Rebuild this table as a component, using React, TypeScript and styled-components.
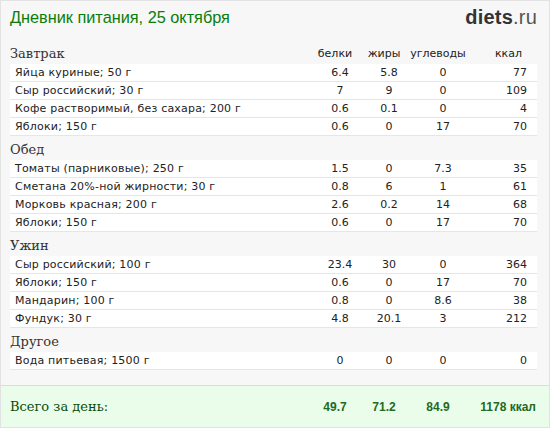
import React from "react";
import styled, { createGlobalStyle } from "styled-components";

const Global = createGlobalStyle`
  html, body { margin: 0; padding: 0; background: #ffffff; }
  * { box-sizing: border-box; }
`;

const Page = styled.div`
  width: 550px;
  height: 428px;
  border: 1px solid #e2e2e2;
  background: #f7f7f7;
  display: flex;
  flex-direction: column;
  overflow: hidden;
`;

const Content = styled.div`
  padding: 0 12px 0 9px;
  display: flex;
  flex-direction: column;
  flex: 1;
`;

const TopBar = styled.div`
  height: 39px;
  display: flex;
  justify-content: space-between;
  align-items: flex-start;
  padding-top: 5px;
`;

const Title = styled.h1`
  margin: 0;
  font-family: "Liberation Sans", Arial, sans-serif;
  font-weight: normal;
  font-size: 16.3px;
  line-height: 22px;
  color: #0a7d0a;
`;

const Logo = styled.div`
  font-family: "Liberation Sans", Arial, sans-serif;
  font-size: 20px;
  line-height: 22px;
  color: #555;
  letter-spacing: 0.2px;
  b {
    color: #333;
    font-weight: bold;
  }
`;

const cols = "300px 50px 48px 60px 54px";

const SectionHead = styled.div`
  height: 24px;
  display: grid;
  grid-template-columns: ${cols};
  padding-right: 15px;
  align-items: center;
`;

const SectionTitle = styled.div`
  font-family: "DejaVu Serif", Georgia, serif;
  font-size: 13px;
  color: #333;
  padding-top: 2px;
`;

const ColHead = styled.div<{ $right?: boolean }>`
  font-family: "DejaVu Sans", Verdana, sans-serif;
  font-size: 11px;
  color: #222;
  text-align: ${(p) => (p.$right ? "right" : "center")};
  padding-top: 2px;
`;

const Row = styled.div`
  height: 18px;
  display: grid;
  grid-template-columns: ${cols};
  padding: 0 15px 0 5px;
  align-items: center;
  background: #ffffff;
  border-bottom: 1px solid #e6e6e6;
  font-family: "DejaVu Sans", Verdana, sans-serif;
  font-size: 11px;
  color: #222;
`;

const NameCell = styled.div`
  white-space: nowrap;
  margin-right: -5px;
  letter-spacing: 0.2px;
`;

const NumCell = styled.div<{ $right?: boolean }>`
  text-align: ${(p) => (p.$right ? "right" : "center")};
`;

const TotalBand = styled.div`
  height: 42px;
  border-top: 1px solid #dcdcdc;
  background: #eafdea;
  display: grid;
  grid-template-columns: 300px 50px 48px 60px 68px;
  padding: 0 13px 0 9px;
  align-items: center;
`;

const TotalLabel = styled.div`
  font-family: "DejaVu Serif", Georgia, serif;
  font-size: 13px;
  color: #0b4d0b;
`;

const TotalNum = styled.div<{ $right?: boolean }>`
  font-family: "Liberation Sans", Arial, sans-serif;
  font-weight: bold;
  font-size: 12px;
  color: #1f6a1f;
  text-align: ${(p) => (p.$right ? "right" : "center")};
`;

type Item = [string, string, string, string, string];
type Section = { title: string; items: Item[]; showCols?: boolean };

const sections: Section[] = [
  {
    title: "Завтрак",
    showCols: true,
    items: [
      ["Яйца куриные; 50 г", "6.4", "5.8", "0", "77"],
      ["Сыр российский; 30 г", "7", "9", "0", "109"],
      ["Кофе растворимый, без сахара; 200 г", "0.6", "0.1", "0", "4"],
      ["Яблоки; 150 г", "0.6", "0", "17", "70"],
    ],
  },
  {
    title: "Обед",
    items: [
      ["Томаты (парниковые); 250 г", "1.5", "0", "7.3", "35"],
      ["Сметана 20%-ной жирности; 30 г", "0.8", "6", "1", "61"],
      ["Морковь красная; 200 г", "2.6", "0.2", "14", "68"],
      ["Яблоки; 150 г", "0.6", "0", "17", "70"],
    ],
  },
  {
    title: "Ужин",
    items: [
      ["Сыр российский; 100 г", "23.4", "30", "0", "364"],
      ["Яблоки; 150 г", "0.6", "0", "17", "70"],
      ["Мандарин; 100 г", "0.8", "0", "8.6", "38"],
      ["Фундук; 30 г", "4.8", "20.1", "3", "212"],
    ],
  },
  {
    title: "Другое",
    items: [["Вода питьевая; 1500 г", "0", "0", "0", "0"]],
  },
];

export default function App() {
  return (
    <>
      <Global />
      <Page>
        <Content>
          <TopBar>
            <Title>Дневник питания, 25 октября</Title>
            <Logo>
              <b>diets</b>.ru
            </Logo>
          </TopBar>
          {sections.map((s) => (
            <div key={s.title}>
              <SectionHead>
                <SectionTitle>{s.title}</SectionTitle>
                {s.showCols && (
                  <>
                    <ColHead>белки</ColHead>
                    <ColHead>жиры</ColHead>
                    <ColHead>углеводы</ColHead>
                    <ColHead $right>ккал</ColHead>
                  </>
                )}
              </SectionHead>
              {s.items.map((it, i) => (
                <Row key={i}>
                  <NameCell>{it[0]}</NameCell>
                  <NumCell>{it[1]}</NumCell>
                  <NumCell>{it[2]}</NumCell>
                  <NumCell>{it[3]}</NumCell>
                  <NumCell $right>{it[4]}</NumCell>
                </Row>
              ))}
            </div>
          ))}
        </Content>
        <TotalBand>
          <TotalLabel>Всего за день:</TotalLabel>
          <TotalNum>49.7</TotalNum>
          <TotalNum>71.2</TotalNum>
          <TotalNum>84.9</TotalNum>
          <TotalNum $right>1178 ккал</TotalNum>
        </TotalBand>
      </Page>
    </>
  );
}
